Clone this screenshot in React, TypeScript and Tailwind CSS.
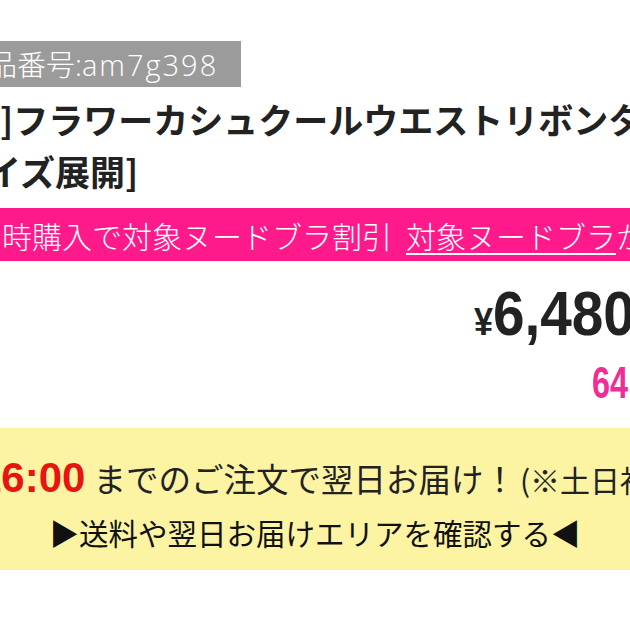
import React from "react";

export default function App() {
  return (
    <div className="w-[630px] h-[630px] overflow-hidden bg-white font-['Noto_Sans_CJK_JP',sans-serif]">
      <div className="pt-[41px]">
        <div className="w-[241px] h-[46px] bg-[#9b9b9b] overflow-hidden flex items-center">
          <span className="whitespace-nowrap ml-[-12px] text-white text-[29px] font-light font-['Open_Sans','Noto_Sans_CJK_JP',sans-serif] leading-none">
            品番号:<span className="tracking-[2px]">am7g398</span>
          </span>
        </div>
      </div>

      <div className="mt-[6px] font-bold text-[35px] leading-[52px] text-[#222] whitespace-nowrap">
        <div className="ml-[0px]">]フラワーカシュクールウエストリボンタンキニ</div>
        <div className="ml-[-49px]">サイズ展開]</div>
      </div>

      <div className="mt-[11px] h-[53px] bg-[#ff1a8c] flex items-center whitespace-nowrap overflow-hidden text-white text-[30px] font-light leading-none">
        <span className="ml-[-28px]">同時購入で対象ヌードブラ割引</span>
        <span className="ml-[14px] underline underline-offset-[5px] decoration-[2px]">対象ヌードブラ</span>
        <span>から</span>
      </div>

      <div className="mt-[21px] flex justify-end mr-[-5px]">
        <span className="inline-block origin-right scale-x-[0.9] font-['Liberation_Sans',sans-serif] font-bold text-[63px] leading-none text-[#222]">
          <span className="text-[38px]">¥</span>6,480
        </span>
      </div>

      <div className="mt-[15px] flex justify-end mr-[2px]">
        <span className="inline-block origin-right scale-x-[0.72] font-['Liberation_Sans',sans-serif] font-bold text-[45px] leading-none text-[#ef2d97]">
          64
        </span>
      </div>

      <div className="mt-[23px] h-[142px] bg-[#fcf4a2] flex flex-col pt-[29px]">
        <div className="whitespace-nowrap ml-[-22px] flex items-baseline leading-none">
          <span className="text-[#e8140f] font-bold font-['Liberation_Sans',sans-serif] text-[42px]">16:00</span>
          <span className="text-[32.5px] text-[#222] ml-[8px]">までのご注文で翌日お届け！</span>
          <span className="text-[30px] text-[#222] ml-[4px]">(※土日祝除く)</span>
        </div>
        <div className="mt-[19px] text-center whitespace-nowrap text-[29.5px] text-[#111] leading-none">
          ▶送料や翌日お届けエリアを確認する◀
        </div>
      </div>
    </div>
  );
}
